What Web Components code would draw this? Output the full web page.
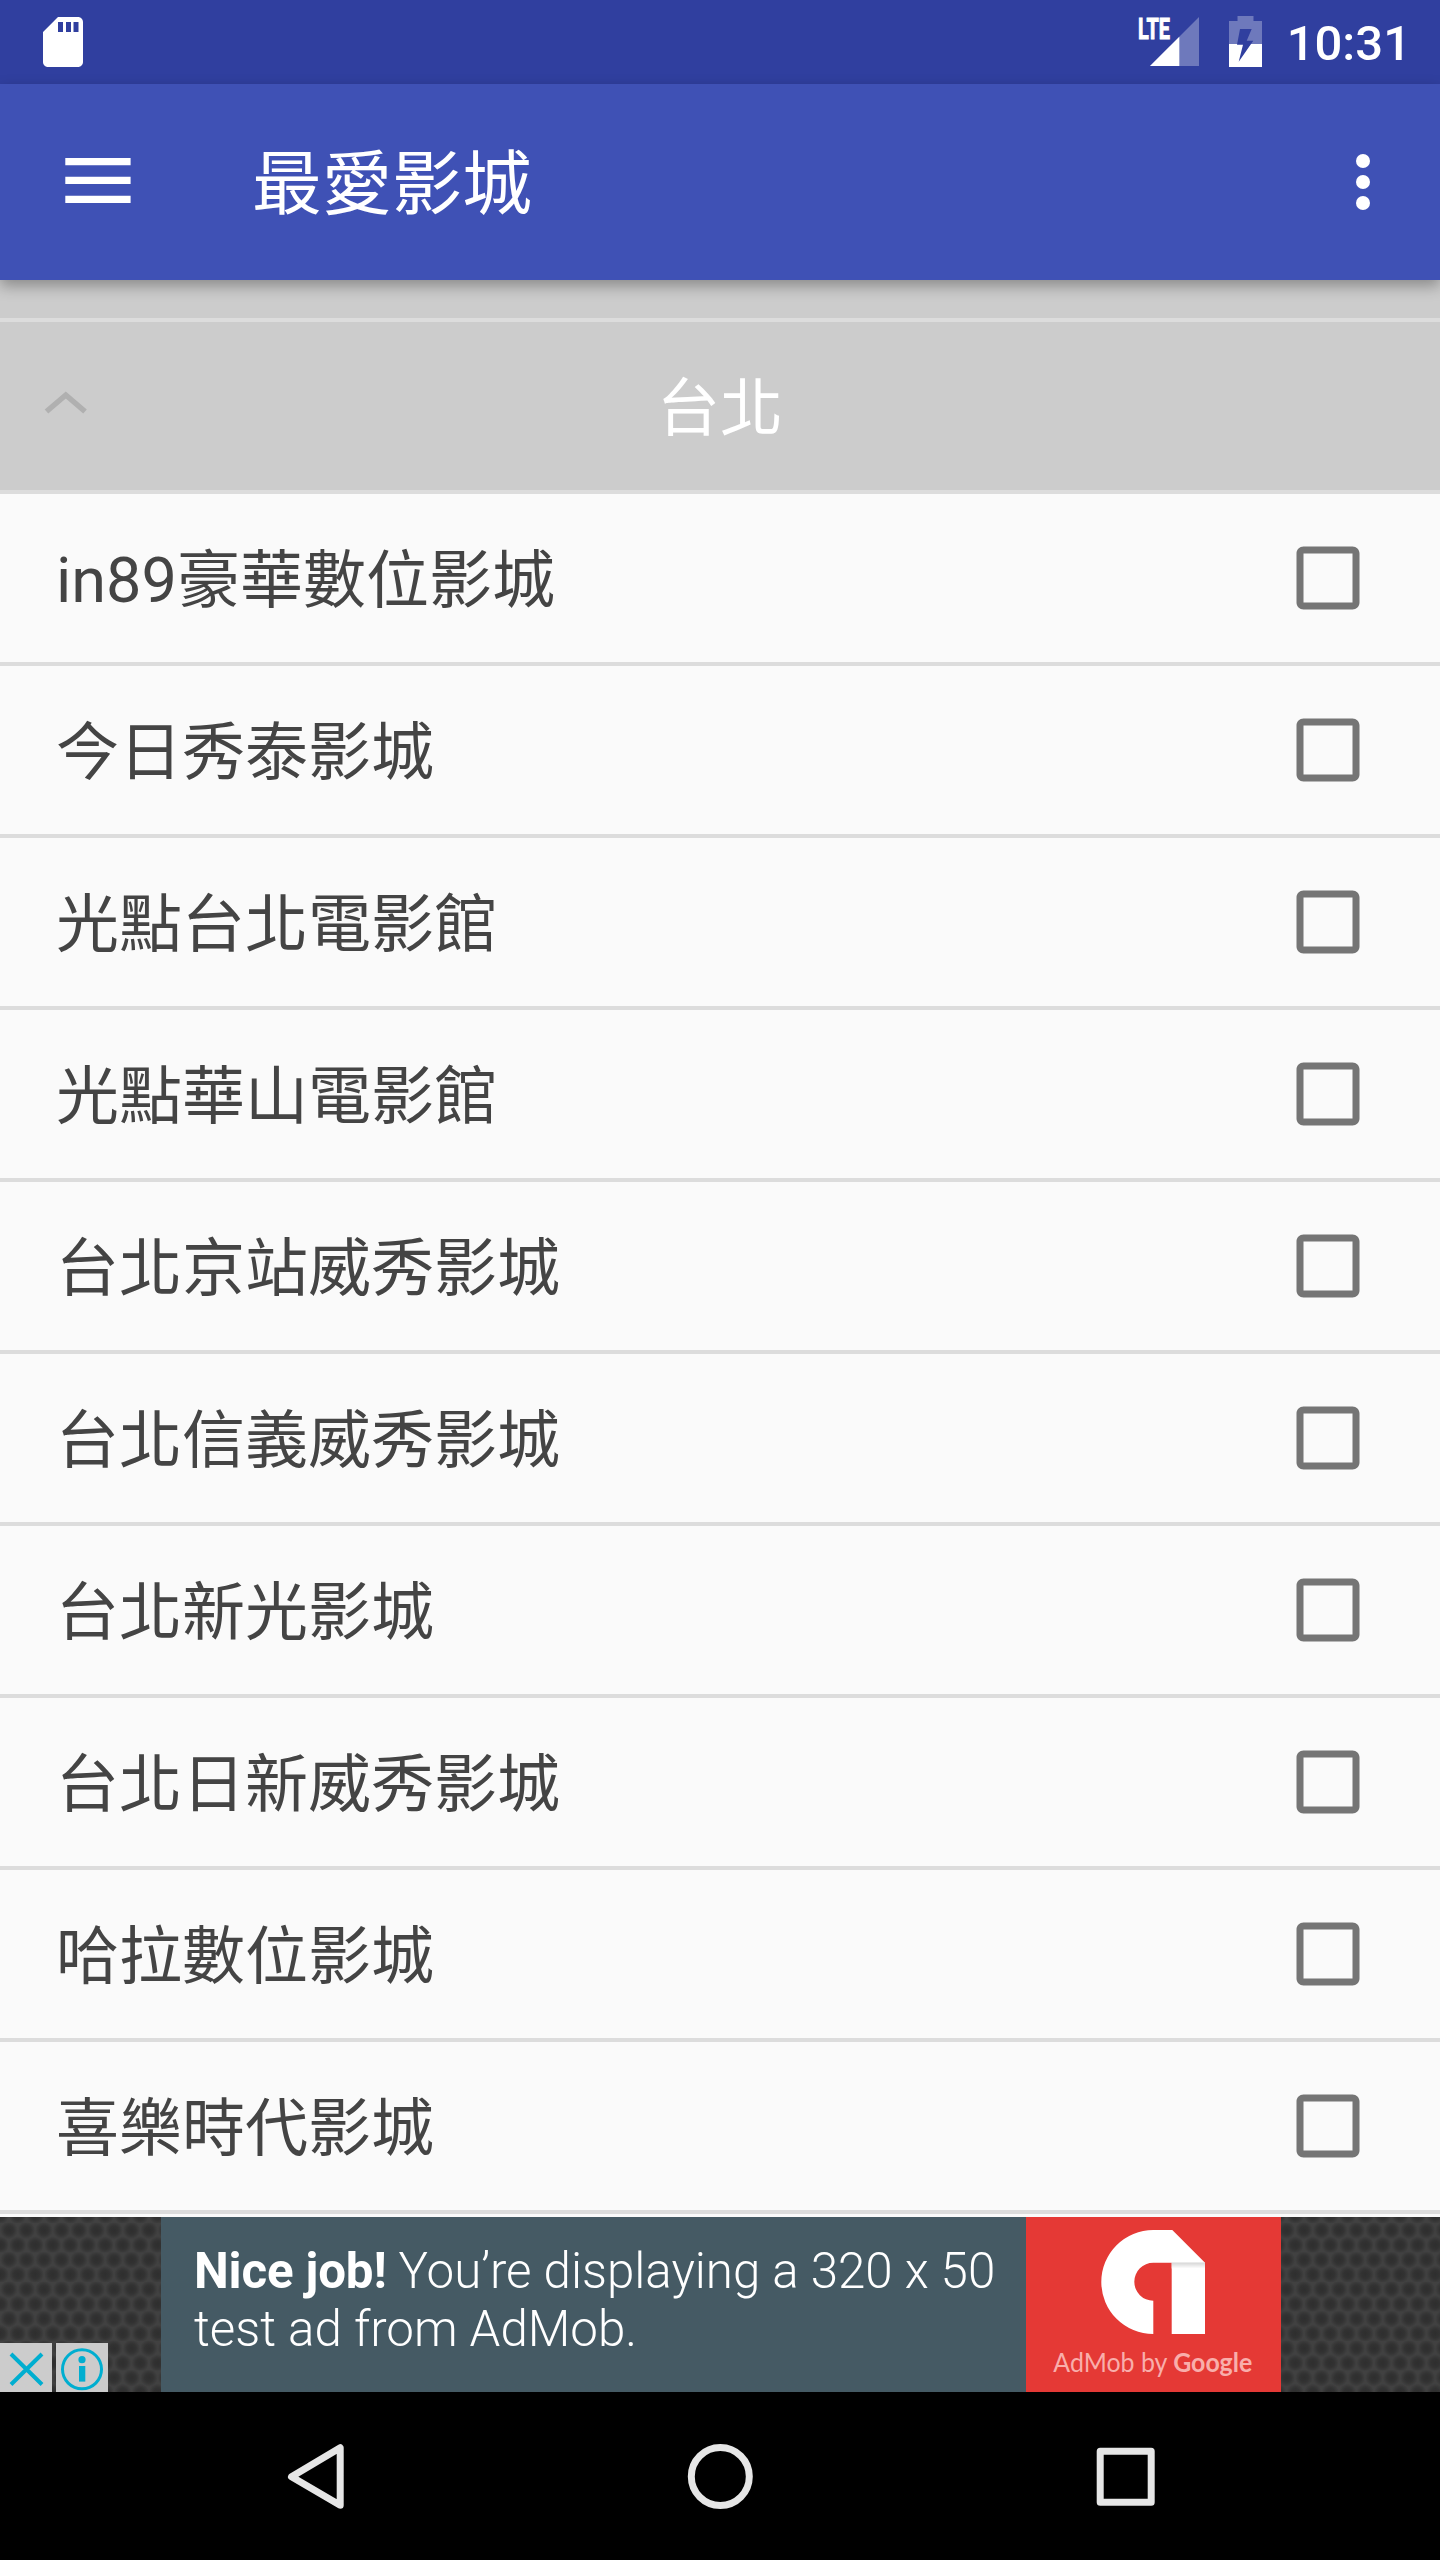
<!DOCTYPE html>
<html lang="zh-Hant">
<head>
<meta charset="utf-8">
<title>最愛影城</title>
<style>
  html, body { margin: 0; padding: 0; }
  body {
    width: 1440px;
    height: 2560px;
    overflow: hidden;
    background: #fafafa;
    font-family: Roboto, "Noto Sans CJK TC", sans-serif;
  }
</style>
</head>
<body>
<cinema-app></cinema-app>

<script>
class StatusBar extends HTMLElement {
  constructor() {
    super();
    this.attachShadow({ mode: "open" });
  }

  connectedCallback() {
    this.shadowRoot.innerHTML = `
<style>
  :host { display: flex; align-items: flex-start; height: 84px; background: #303f9f; color: #fff; box-sizing: border-box; padding: 0 29px 0 33px; }
  svg { display: block; }
  .sd { margin-top: 12px; }
  .spacer { flex: 1; }
  .signal { margin-right: 30px; }
  .battery { margin-right: 25px; }
  .clock { font-size: 49px; line-height: 84px; font-weight: 500; padding-top: 2px; }
</style>
<svg class="sd" width="60" height="60" viewBox="0 0 24 24"><path fill="#fff" d="M18 2h-8L4 8v12c0 1.100.9 2 2 2h12c1.100 0 2-.9 2-2V4c0-1.100-.9-2-2-2zm-6 6h-2V4h2v4zm3.200 0h-2V4h2v4zm3 0h-2V4h2v4z"/></svg>
<div class="spacer"></div>
<svg class="signal" width="64" height="84">
  <path d="M15 66L64 17V66z" fill="#fff" fill-opacity=".3"/>
  <path d="M15 66L44.300 36.700V66z" fill="#fff"/>
  <text x="3" y="39" font-size="29.500" font-weight="700" fill="#fff" stroke="#fff" stroke-width="1" textLength="32" lengthAdjust="spacingAndGlyphs">LTE</text>
</svg>
<svg class="battery" width="33" height="84">
  <defs><mask id="m"><rect width="33" height="84" fill="#fff"/><path d="M11 29h11.700l-5 11.700h6.600L9.700 61.700l4.300-17H8z" fill="#000"/></mask></defs>
  <g mask="url(#m)" fill="#fff">
    <path d="M0 21h8.500v-5h16v5H33v23H0z" fill-opacity=".3"/>
    <path d="M0 44h33v23H0z"/>
  </g>
</svg>
<div class="clock">${this.getAttribute("time")}</div>
`;
  }
}

class ToolBar extends HTMLElement {
  constructor() {
    super();
    this.attachShadow({ mode: "open" });
    this.shadowRoot.innerHTML = `
<style>
  :host { display: flex; align-items: center; height: 196px; background: #3f51b5; color: #fff; box-sizing: border-box; padding: 0 70px 0 65px; position: relative; z-index: 1; box-shadow: 0 6px 14px rgba(0, 0, 0, .32); }
  .title { flex: 1; margin: 0 0 0 121px; padding-top: 5px; font-size: 70px; line-height: 100px; font-weight: 400; }
  svg { display: block; }
</style>
<svg width="66" height="48" fill="#fff"><path d="M.3 0h65.300v7.300H.3zM.3 18.800h65.300v7.300H.3zM.3 37.800h65.300v7.300H.3z"/></svg>
<h1 class="title"><slot></slot></h1>
<svg width="14" height="56" fill="#fff"><circle cx="7" cy="7" r="7"/><circle cx="7" cy="28" r="7"/><circle cx="7" cy="49" r="7"/></svg>
`;
  }
}

class GroupHeader extends HTMLElement {
  constructor() {
    super();
    this.attachShadow({ mode: "open" });
    this.shadowRoot.innerHTML = `
<style>
  :host { display: grid; grid-template-columns: 90px 1fr 90px; align-items: center; height: 172px; box-sizing: border-box; background: #ccc; border-bottom: 4px solid #dcdcdc; color: #fff; font-size: 63px; line-height: 90px; text-align: center; }
  svg { display: block; }
  .name { padding-top: 6px; }
</style>
<svg width="90" height="40"><path fill="none" stroke="#b0b0b0" stroke-width="5.500" d="M46.500 25.500L65.800 9 85 25.500"/></svg>
<div class="name"><slot></slot></div>
`;
  }
}

class CinemaRow extends HTMLElement {
  constructor() {
    super();
    this.attachShadow({ mode: "open" });
    this.shadowRoot.innerHTML = `
<style>
  :host { display: flex; align-items: center; justify-content: space-between; height: 172px; box-sizing: border-box; padding: 0 80px 0 56px; background: #fafafa; border-bottom: 4px solid #dcdcdc; color: #444; font-size: 63px; line-height: 90px; }
  svg { display: block; }
  .name { padding-top: 6px; }
</style>
<div class="name"><slot></slot></div>
<svg width="64" height="64" viewBox="2.857 2.857 18.286 18.286"><path fill="#757575" d="M19 5v14H5V5h14m0-2H5c-1.100 0-2 .9-2 2v14c0 1.100.9 2 2 2h14c1.100 0 2-.9 2-2V5c0-1.100-.9-2-2-2z"/></svg>
`;
  }
}

class AdBanner extends HTMLElement {
  constructor() {
    super();
    this.attachShadow({ mode: "open" });
    this.shadowRoot.innerHTML = `
<style>
  :host { display: flex; justify-content: center; height: 175px; box-sizing: border-box; padding-left: 2px; position: relative; overflow: hidden; background: #3a3a3a; }
  svg { display: block; }
  .mesh { position: absolute; left: 0; top: 0; }
  .copy { position: relative; width: 865px; box-sizing: border-box; padding: 25px 0 0 33px; background: #455a64; color: #fff; font-size: 49.250px; line-height: 58px; font-weight: 300; white-space: nowrap; }
  .copy b { font-weight: 700; letter-spacing: -.15px; }
  .logo { position: relative; background: #e53935; }
  .choices { position: absolute; left: 0; bottom: 0; display: flex; gap: 4px; }
  .choices svg { background: #ccc; }
</style>
<svg class="mesh" width="1440" height="175">
  <defs>
    <radialGradient id="dot"><stop offset="0" stop-color="#2e2e2e"/><stop offset=".5" stop-color="#323232"/><stop offset="1" stop-color="#404040"/></radialGradient>
    <pattern id="mesh" width="17.500" height="29.500" patternUnits="userSpaceOnUse" patternTransform="translate(.2 5.900)">
      <rect width="17.500" height="29.500" fill="#414141"/>
      <circle cx="8.750" cy="7.400" r="8.600" fill="url(#dot)"/>
      <circle cx="0" cy="22.100" r="8.600" fill="url(#dot)"/>
      <circle cx="17.500" cy="22.100" r="8.600" fill="url(#dot)"/>
    </pattern>
  </defs>
  <rect width="1440" height="175" fill="url(#mesh)"/>
</svg>
<div class="copy"><b>Nice job!</b> You’re displaying a 320 x 50<br>test ad from AdMob.</div>
<svg class="logo" width="255" height="175">
  <defs><linearGradient id="fold" x1="0" y1="0" x2="0" y2="1"><stop offset="0" stop-color="#d5d5d5"/><stop offset="1" stop-color="#fff"/></linearGradient></defs>
  <path fill="#fff" d="M127.300 13H146.300L179 45.700V117H145.700V45.700H127.300A18.900 18.900 0 0 0 127.300 83.700V117A52 52 0 0 1 127.300 13z"/>
  <rect x="145.700" y="45.500" width="33.300" height="6" fill="url(#fold)"/>
  <text x="27.300" y="155" font-family="Lato" font-size="26.500" fill="#f9aeab" textLength="199" lengthAdjust="spacingAndGlyphs">AdMob by <tspan font-weight="700">Google</tspan></text>
</svg>
<div class="choices">
  <svg width="52" height="49"><path d="M11 11L42 41.500M42 11L11 41.500" stroke="#00aed0" stroke-width="4"/></svg>
  <svg width="52" height="49"><circle cx="26" cy="26.300" r="19.500" fill="none" stroke="#00aed0" stroke-width="3"/><circle cx="26" cy="16.700" r="3.600" fill="#00aed0"/><path d="M23 23h6.300v15.600H23z" fill="#00aed0"/></svg>
</div>
`;
  }
}

class NavBar extends HTMLElement {
  constructor() {
    super();
    this.attachShadow({ mode: "open" });
    this.shadowRoot.innerHTML = `
<style>
  :host { display: flex; align-items: center; justify-content: center; gap: 321px; height: 168px; background: #000; }
  svg { display: block; fill: none; stroke: #e6e6e6; stroke-width: 7; stroke-linejoin: round; }
</style>
<svg width="84" height="84"><path d="M67.200 13.800V71.200L18.500 42.800z"/></svg>
<svg width="84" height="84"><circle cx="42.300" cy="42.500" r="29"/></svg>
<svg width="84" height="84"><path d="M17.200 17.200h51v51h-51z"/></svg>
`;
  }
}

class CinemaApp extends HTMLElement {
  constructor() {
    super();
    this.attachShadow({ mode: "open" });
  }

  connectedCallback() {
    const cinemas = [
      "in89豪華數位影城",
      "今日秀泰影城",
      "光點台北電影館",
      "光點華山電影館",
      "台北京站威秀影城",
      "台北信義威秀影城",
      "台北新光影城",
      "台北日新威秀影城",
      "哈拉數位影城",
      "喜樂時代影城",
    ];

    this.shadowRoot.innerHTML = `
<style>
  :host { display: flex; flex-direction: column; width: 1440px; height: 2560px; }
  .list { flex: 1; overflow: hidden; }
  .previous { height: 38px; background: #ccc; border-bottom: 4px solid #dcdcdc; }
</style>
<status-bar time="10:31"></status-bar>
<tool-bar>最愛影城</tool-bar>
<div class="list">
  <div class="previous"></div>
  <group-header>台北</group-header>
  ${cinemas.map((name) => `<cinema-row>${name}</cinema-row>`).join("")}
</div>
<ad-banner></ad-banner>
<nav-bar></nav-bar>
`;
  }
}

customElements.define("status-bar", StatusBar);
customElements.define("tool-bar", ToolBar);
customElements.define("group-header", GroupHeader);
customElements.define("cinema-row", CinemaRow);
customElements.define("ad-banner", AdBanner);
customElements.define("nav-bar", NavBar);
customElements.define("cinema-app", CinemaApp);
</script>
</body>
</html>
